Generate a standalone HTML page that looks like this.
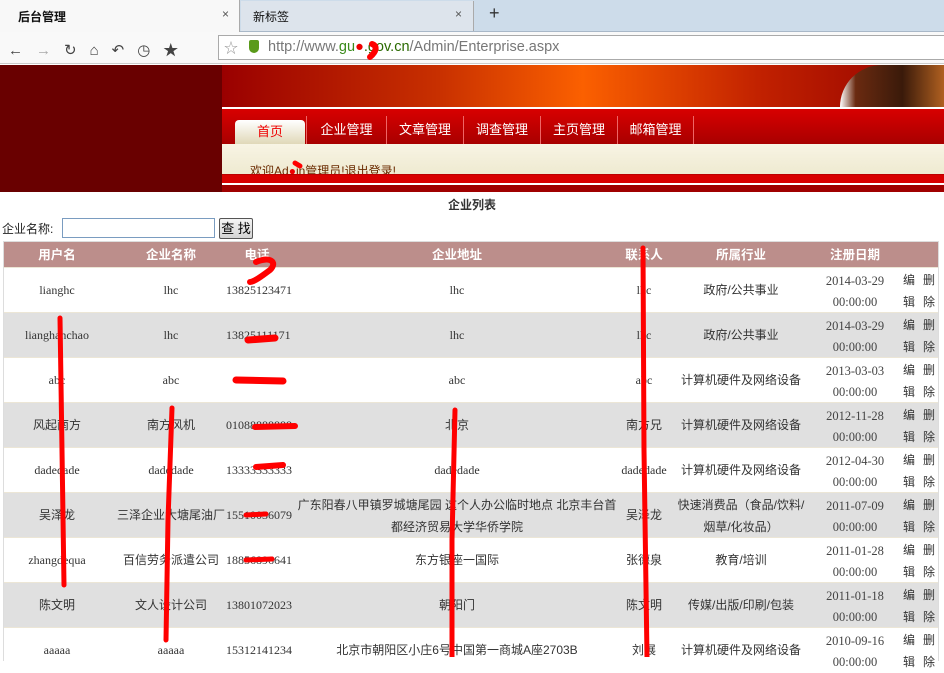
<!DOCTYPE html>
<html><head><meta charset="utf-8"><style>
*{margin:0;padding:0;box-sizing:border-box}
body{width:944px;height:657px;overflow:hidden;background:#fff;position:relative;font-family:"Liberation Sans","Noto Sans CJK SC",sans-serif;font-size:12px;color:#333}
.a{position:absolute}
.tabs{left:0;top:0;width:944px;height:32px;background:#cddcea;border-bottom:1px solid #a9b8c8}
.tab1{left:0;top:0;width:240px;height:32px;background:#f8f8f8;border-right:1px solid #aaa}
.tab2{left:241px;top:1px;width:233px;height:30px;background:#dde4ec;border-right:1px solid #aaa}
.tool{left:0;top:32px;width:944px;height:32px;background:#f9f9f9;border-bottom:1px solid #ccc}
.url{left:218px;top:35px;width:730px;height:25px;background:#fff;border:1px solid #aaa}
.row{position:absolute;left:3px;width:936px;height:45px;border-top:1px solid #ece6d6}
.g{background:#e0e0e0}
.c{position:absolute;top:0;height:45px;line-height:45px;text-align:center;font-family:"Liberation Serif","Noto Sans CJK SC",serif;font-size:12px;white-space:nowrap}
.z{font-family:"Liberation Sans","Noto Sans CJK SC",sans-serif;font-size:12px}
.c1{left:0;width:108px}.c2{left:108px;width:120px}.c3{left:223px;width:70px;text-align:left}.c4{left:289px;width:330px}.c5{left:601px;width:80px}.c6{left:671px;width:134px}
.d{position:absolute;left:812px;width:80px;text-align:center;font-family:"Liberation Serif",serif;font-size:12.5px;color:#444}
.o{position:absolute;left:900px;width:50px;font-size:12px;letter-spacing:8px;white-space:nowrap}
.h{position:absolute;top:0;line-height:26px;color:#fff;font-weight:bold;font-size:12.5px;text-align:center}
</style></head><body>
<div class="a tabs"></div>
<div class="a tab1"><span class="a" style="left:18px;top:8px;font-size:12px;font-weight:bold;color:#111">后台管理</span><span class="a" style="left:222px;top:7px;color:#555">×</span></div>
<div class="a tab2"><span class="a" style="left:12px;top:7px;color:#111">新标签</span><span class="a" style="left:214px;top:6px;color:#555">×</span></div>
<span class="a" style="left:489px;top:3px;font-size:18px;color:#333">+</span>
<div class="a tool"></div>
<div class="a" style="left:8px;top:39px;font-size:15px;color:#444;letter-spacing:13px">←<span style="color:#aaa">→</span>↻⌂↶◷★</div>
<div class="a url"><span class="a" style="left:5px;top:2px;color:#999;font-size:14px">☆</span><span class="a" style="left:30px;top:4px;width:10px;height:13px;background:#5a9a1a;border-radius:2px 2px 5px 5px"></span><span class="a" style="left:49px;top:3px;font-size:14.5px;color:#777">http://www.<span style="color:#3a8a1a">gu</span><span style="color:#e00">●</span><span style="color:#2a6a00">.gov.cn</span>/Admin/Enterprise.aspx</span></div>
<div class="a" style="left:0;top:65px;width:222px;height:127px;background:#690000"></div>
<div class="a" style="left:222px;top:65px;width:722px;height:43px;background:linear-gradient(90deg,#9a0000 0%,#c83000 30%,#fb6000 50%,#c02000 75%,#900000 100%)"></div>
<div class="a" style="left:840px;top:65px;width:104px;height:42px;background:linear-gradient(90deg,#fff 0,#6a2a10 15%,#3a1a0a 60%,#b06020 100%);border-radius:60px 0 0 0"></div>
<div class="a" style="left:222px;top:107px;width:722px;height:2px;background:#fff"></div>
<div class="a" style="left:222px;top:109px;width:722px;height:35px;background:linear-gradient(#d80000,#a80000)"></div>
<div class="a" style="left:235px;top:120px;width:70px;height:24px;background:linear-gradient(#fff,#e0d8b8);border-radius:4px 4px 0 0;text-align:center;line-height:24px;color:#e00;font-size:13px">首页</div>
<div class="a" style="left:306px;top:116px;color:#fff;font-size:13px;line-height:28px;white-space:nowrap">
<span style="display:inline-block;width:80px;text-align:center;border-left:1px solid #e66">企业管理</span><span style="display:inline-block;width:77px;text-align:center;border-left:1px solid #e66">文章管理</span><span style="display:inline-block;width:77px;text-align:center;border-left:1px solid #e66">调查管理</span><span style="display:inline-block;width:77px;text-align:center;border-left:1px solid #e66">主页管理</span><span style="display:inline-block;width:77px;text-align:center;border-left:1px solid #e66;border-right:1px solid #e66">邮箱管理</span></div>
<div class="a" style="left:222px;top:144px;width:722px;height:31px;background:linear-gradient(#f8f4e4,#eeead0)"></div>
<div class="a" style="left:250px;top:162px;color:#6a2a00;font-size:12px">欢迎Ad<span style="color:#e00">●</span>in管理员!退出登录!</div>
<div class="a" style="left:222px;top:174px;width:722px;height:10px;background:#d80000;border-top:1px solid #b00"></div>
<div class="a" style="left:222px;top:183px;width:722px;height:2px;background:#fff"></div>
<div class="a" style="left:222px;top:185px;width:722px;height:7px;background:#a00000"></div>
<div class="a" style="left:0;top:196px;width:944px;text-align:center;font-weight:bold;font-size:12px;color:#333">企业列表</div>
<div class="a" style="left:2px;top:220px;font-size:12px;color:#222">企业名称:</div>
<div class="a" style="left:62px;top:218px;width:153px;height:20px;border:1px solid #7a9cc0;background:#fff"></div>
<div class="a" style="left:219px;top:218px;width:34px;height:21px;border:1px solid #555;border-radius:2px;background:linear-gradient(#f4f4f4,#d4d4d4);font-size:13px;text-align:center;line-height:19px;color:#000">查 找</div>
<div class="a" style="left:3px;top:241px;width:936px;height:26px;background:#bc8e8b;border-top:1px solid #eee">
<div class="h" style="left:0;width:108px">用户名</div><div class="h" style="left:108px;width:120px">企业名称</div><div class="h" style="left:224px;width:60px">电话</div><div class="h" style="left:289px;width:330px">企业地址</div><div class="h" style="left:601px;width:80px">联系人</div><div class="h" style="left:671px;width:134px">所属行业</div><div class="h" style="left:812px;width:80px">注册日期</div></div>

<div class="row" style="top:267px"><div class="c c1">lianghc</div><div class="c c2">lhc</div><div class="c c3">13825123471</div><div class="c c4">lhc</div><div class="c c5">lhc</div><div class="c c6 z">政府/公共事业</div><div class="d" style="top:6px">2014-03-29</div><div class="d" style="top:27px">00:00:00</div><div class="o" style="top:3px">编删</div><div class="o" style="top:25px">辑除</div></div>
<div class="row g" style="top:312px"><div class="c c1">lianghanchao</div><div class="c c2">lhc</div><div class="c c3">13825111171</div><div class="c c4">lhc</div><div class="c c5">lhc</div><div class="c c6 z">政府/公共事业</div><div class="d" style="top:6px">2014-03-29</div><div class="d" style="top:27px">00:00:00</div><div class="o" style="top:3px">编删</div><div class="o" style="top:25px">辑除</div></div>
<div class="row" style="top:357px"><div class="c c1">abc</div><div class="c c2">abc</div><div class="c c3"></div><div class="c c4">abc</div><div class="c c5">abc</div><div class="c c6 z">计算机硬件及网络设备</div><div class="d" style="top:6px">2013-03-03</div><div class="d" style="top:27px">00:00:00</div><div class="o" style="top:3px">编删</div><div class="o" style="top:25px">辑除</div></div>
<div class="row g" style="top:402px"><div class="c c1 z">风起南方</div><div class="c c2 z">南方风机</div><div class="c c3">01088888888</div><div class="c c4 z">北京</div><div class="c c5 z">南方兄</div><div class="c c6 z">计算机硬件及网络设备</div><div class="d" style="top:6px">2012-11-28</div><div class="d" style="top:27px">00:00:00</div><div class="o" style="top:3px">编删</div><div class="o" style="top:25px">辑除</div></div>
<div class="row" style="top:447px"><div class="c c1">dadedade</div><div class="c c2">dadedade</div><div class="c c3">13333333333</div><div class="c c4">dadedade</div><div class="c c5">dadedade</div><div class="c c6 z">计算机硬件及网络设备</div><div class="d" style="top:6px">2012-04-30</div><div class="d" style="top:27px">00:00:00</div><div class="o" style="top:3px">编删</div><div class="o" style="top:25px">辑除</div></div>
<div class="row g" style="top:492px"><div class="c c1 z">吴泽龙</div><div class="c c2 z">三泽企业大塘尾油厂</div><div class="c c3">15510036079</div><div class="c c4 z" style="line-height:22px;white-space:normal;padding-top:1px">广东阳春八甲镇罗城塘尾园 这个人办公临时地点 北京丰台首都经济贸易大学华侨学院</div><div class="c c5 z">吴泽龙</div><div class="c c6 z" style="line-height:22px;white-space:normal;padding-top:1px">快速消费品（食品/饮料/烟草/化妆品）</div><div class="d" style="top:6px">2011-07-09</div><div class="d" style="top:27px">00:00:00</div><div class="o" style="top:3px">编删</div><div class="o" style="top:25px">辑除</div></div>
<div class="row" style="top:537px"><div class="c c1">zhangdequa</div><div class="c c2 z">百信劳务派遣公司</div><div class="c c3">18856896641</div><div class="c c4 z">东方银座一国际</div><div class="c c5 z">张德泉</div><div class="c c6 z">教育/培训</div><div class="d" style="top:6px">2011-01-28</div><div class="d" style="top:27px">00:00:00</div><div class="o" style="top:3px">编删</div><div class="o" style="top:25px">辑除</div></div>
<div class="row g" style="top:582px"><div class="c c1 z">陈文明</div><div class="c c2 z">文人设计公司</div><div class="c c3">13801072023</div><div class="c c4 z">朝阳门</div><div class="c c5 z">陈文明</div><div class="c c6 z">传媒/出版/印刷/包装</div><div class="d" style="top:6px">2011-01-18</div><div class="d" style="top:27px">00:00:00</div><div class="o" style="top:3px">编删</div><div class="o" style="top:25px">辑除</div></div>
<div class="row" style="top:627px"><div class="c c1">aaaaa</div><div class="c c2">aaaaa</div><div class="c c3">15312141234</div><div class="c c4 z">北京市朝阳区小庄6号中国第一商城A座2703B</div><div class="c c5 z">刘展</div><div class="c c6 z">计算机硬件及网络设备</div><div class="d" style="top:6px">2010-09-16</div><div class="d" style="top:27px">00:00:00</div><div class="o" style="top:3px">编删</div><div class="o" style="top:25px">辑除</div></div>
<div class="a" style="left:3px;top:241px;width:936px;height:420px;border:1px solid #ddd;border-bottom:none"></div>

<svg class="a" style="left:0;top:0" width="944" height="657" fill="none" stroke="#f00" stroke-linecap="round">
<path d="M372 44 C378 46 376 52 370 57" stroke-width="6"/>
<path d="M60 318 L62 450 L64 585" stroke-width="5"/>
<path d="M172 408 L168 520 L166 640" stroke-width="5"/>
<path d="M455 410 L452 540 L452 657" stroke-width="5"/>
<path d="M643 248 L644 450 L647 657" stroke-width="5"/>
<path d="M256 262 C270 256 278 262 270 270 C262 276 254 282 250 282" stroke-width="6"/>
<path d="M248 340 L275 338" stroke-width="7"/>
<path d="M236 380 L283 381" stroke-width="7"/>
<path d="M255 427 L295 426" stroke-width="6"/>
<path d="M256 467 L283 465" stroke-width="6"/>
<path d="M246 515 L266 514" stroke-width="5"/>
<path d="M246 560 L272 559" stroke-width="5"/>
<path d="M295 163 L300 166" stroke-width="5"/>
</svg>
</body></html>
